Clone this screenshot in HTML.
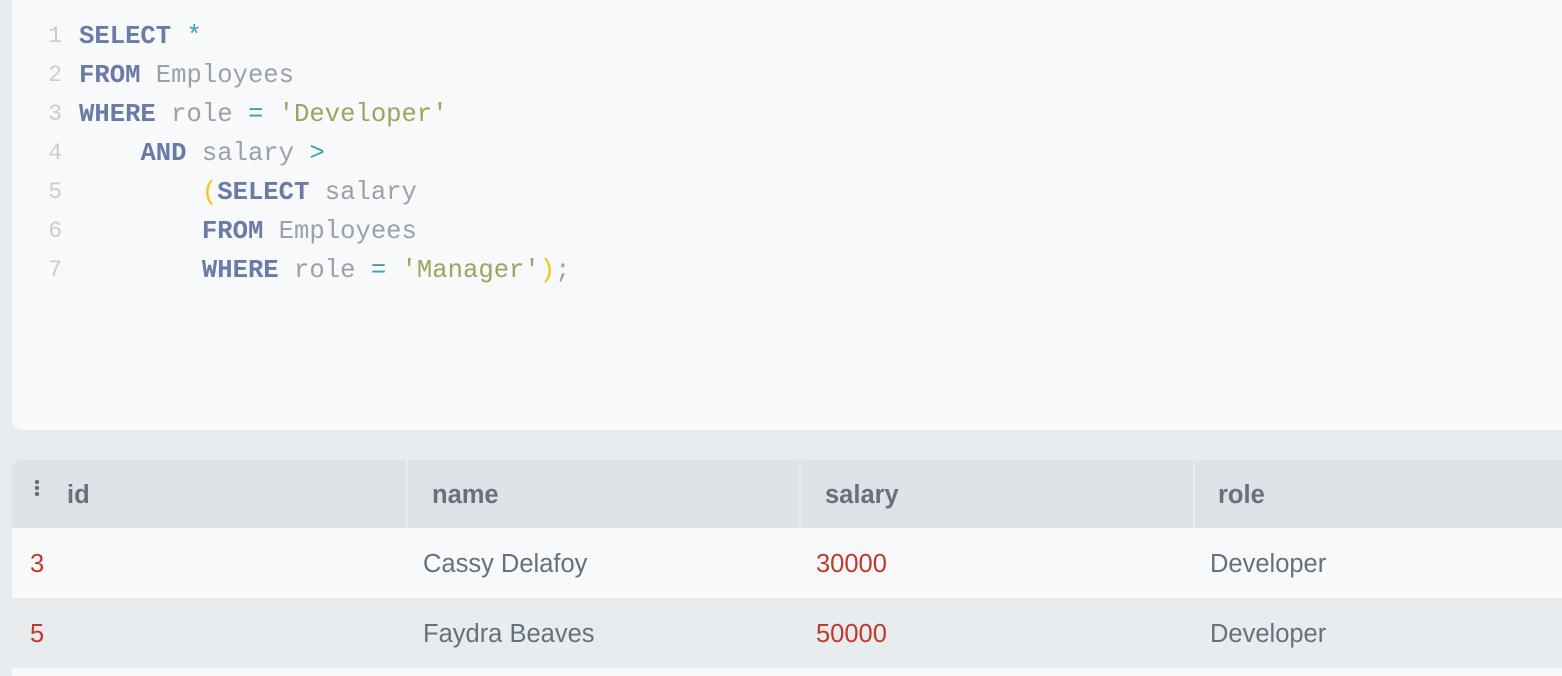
<!DOCTYPE html>
<html><head><style>
html,body{margin:0;width:1562px;height:676px;overflow:hidden}
body{background:#e8ecef;position:relative;font-family:"Liberation Sans",sans-serif}
.ed{position:absolute;left:12px;top:0;width:1550px;height:430px;background:#f7f9fb;border-bottom-left-radius:11px}
.code{position:absolute;left:0;top:17px;font-family:"Liberation Mono",monospace;font-size:25.6px;line-height:39px;white-space:pre;color:#9aa1a8}
.code div{height:39px}
.ln{display:inline-block;width:50px;text-align:right;color:#c9cdd1;margin-right:17px;font-size:23px;line-height:39px;vertical-align:top}
.k{color:#6b7ba8;font-weight:bold}.o{color:#3e9fb0}.s{color:#95a85e}.p{color:#f5c518}
.tbl{position:absolute;left:12px;top:460px;width:1550px}
.row{position:relative;height:70px}
.hd{height:68px;background:#dfe3e8;border-top-left-radius:11px}
.c{position:absolute;top:0;height:100%;font-size:25.5px;line-height:72px;color:#65717c;white-space:nowrap}
.hd .c{font-weight:bold;line-height:70px}
.dv{position:absolute;top:0;width:2px;height:68px;background:#e9ecef}
.r{color:#c0392b}
</style></head><body>
<div class="ed"><div class="code"><div><span class="ln">1</span><span class="k">SELECT</span> <span class="o">*</span></div><div><span class="ln">2</span><span class="k">FROM</span> Employees</div><div><span class="ln">3</span><span class="k">WHERE</span> role <span class="o">=</span> <span class="s">'Developer'</span></div><div><span class="ln">4</span>    <span class="k">AND</span> salary <span class="o">&gt;</span></div><div><span class="ln">5</span>        <span class="p">(</span><span class="k">SELECT</span> salary</div><div><span class="ln">6</span>        <span class="k">FROM</span> Employees</div><div><span class="ln">7</span>        <span class="k">WHERE</span> role <span class="o">=</span> <span class="s">'Manager'</span><span class="p">)</span>;</div></div></div>
<div class="tbl">
<div class="row hd">
<svg style="position:absolute;left:21px;top:19px" width="8" height="18"><circle cx="4" cy="3" r="2.2" fill="#65717c"/><circle cx="4" cy="9" r="2.2" fill="#65717c"/><circle cx="4" cy="15" r="2.2" fill="#65717c"/></svg>
<div class="c" style="left:55px">id</div><div class="dv" style="left:394px"></div>
<div class="c" style="left:420px">name</div><div class="dv" style="left:787px"></div>
<div class="c" style="left:813px">salary</div><div class="dv" style="left:1181px"></div>
<div class="c" style="left:1206px">role</div></div>
<div class="row" style="background:#f7f9fb"><div class="c r" style="left:18px">3</div><div class="c" style="left:411px">Cassy Delafoy</div><div class="c r" style="left:804px">30000</div><div class="c" style="left:1198px">Developer</div></div>
<div class="row" style="background:#e8ecef"><div class="c r" style="left:18px">5</div><div class="c" style="left:411px">Faydra Beaves</div><div class="c r" style="left:804px">50000</div><div class="c" style="left:1198px">Developer</div></div>
<div class="row" style="background:#f7f9fb;height:8px"></div>
</div>
</body></html>
